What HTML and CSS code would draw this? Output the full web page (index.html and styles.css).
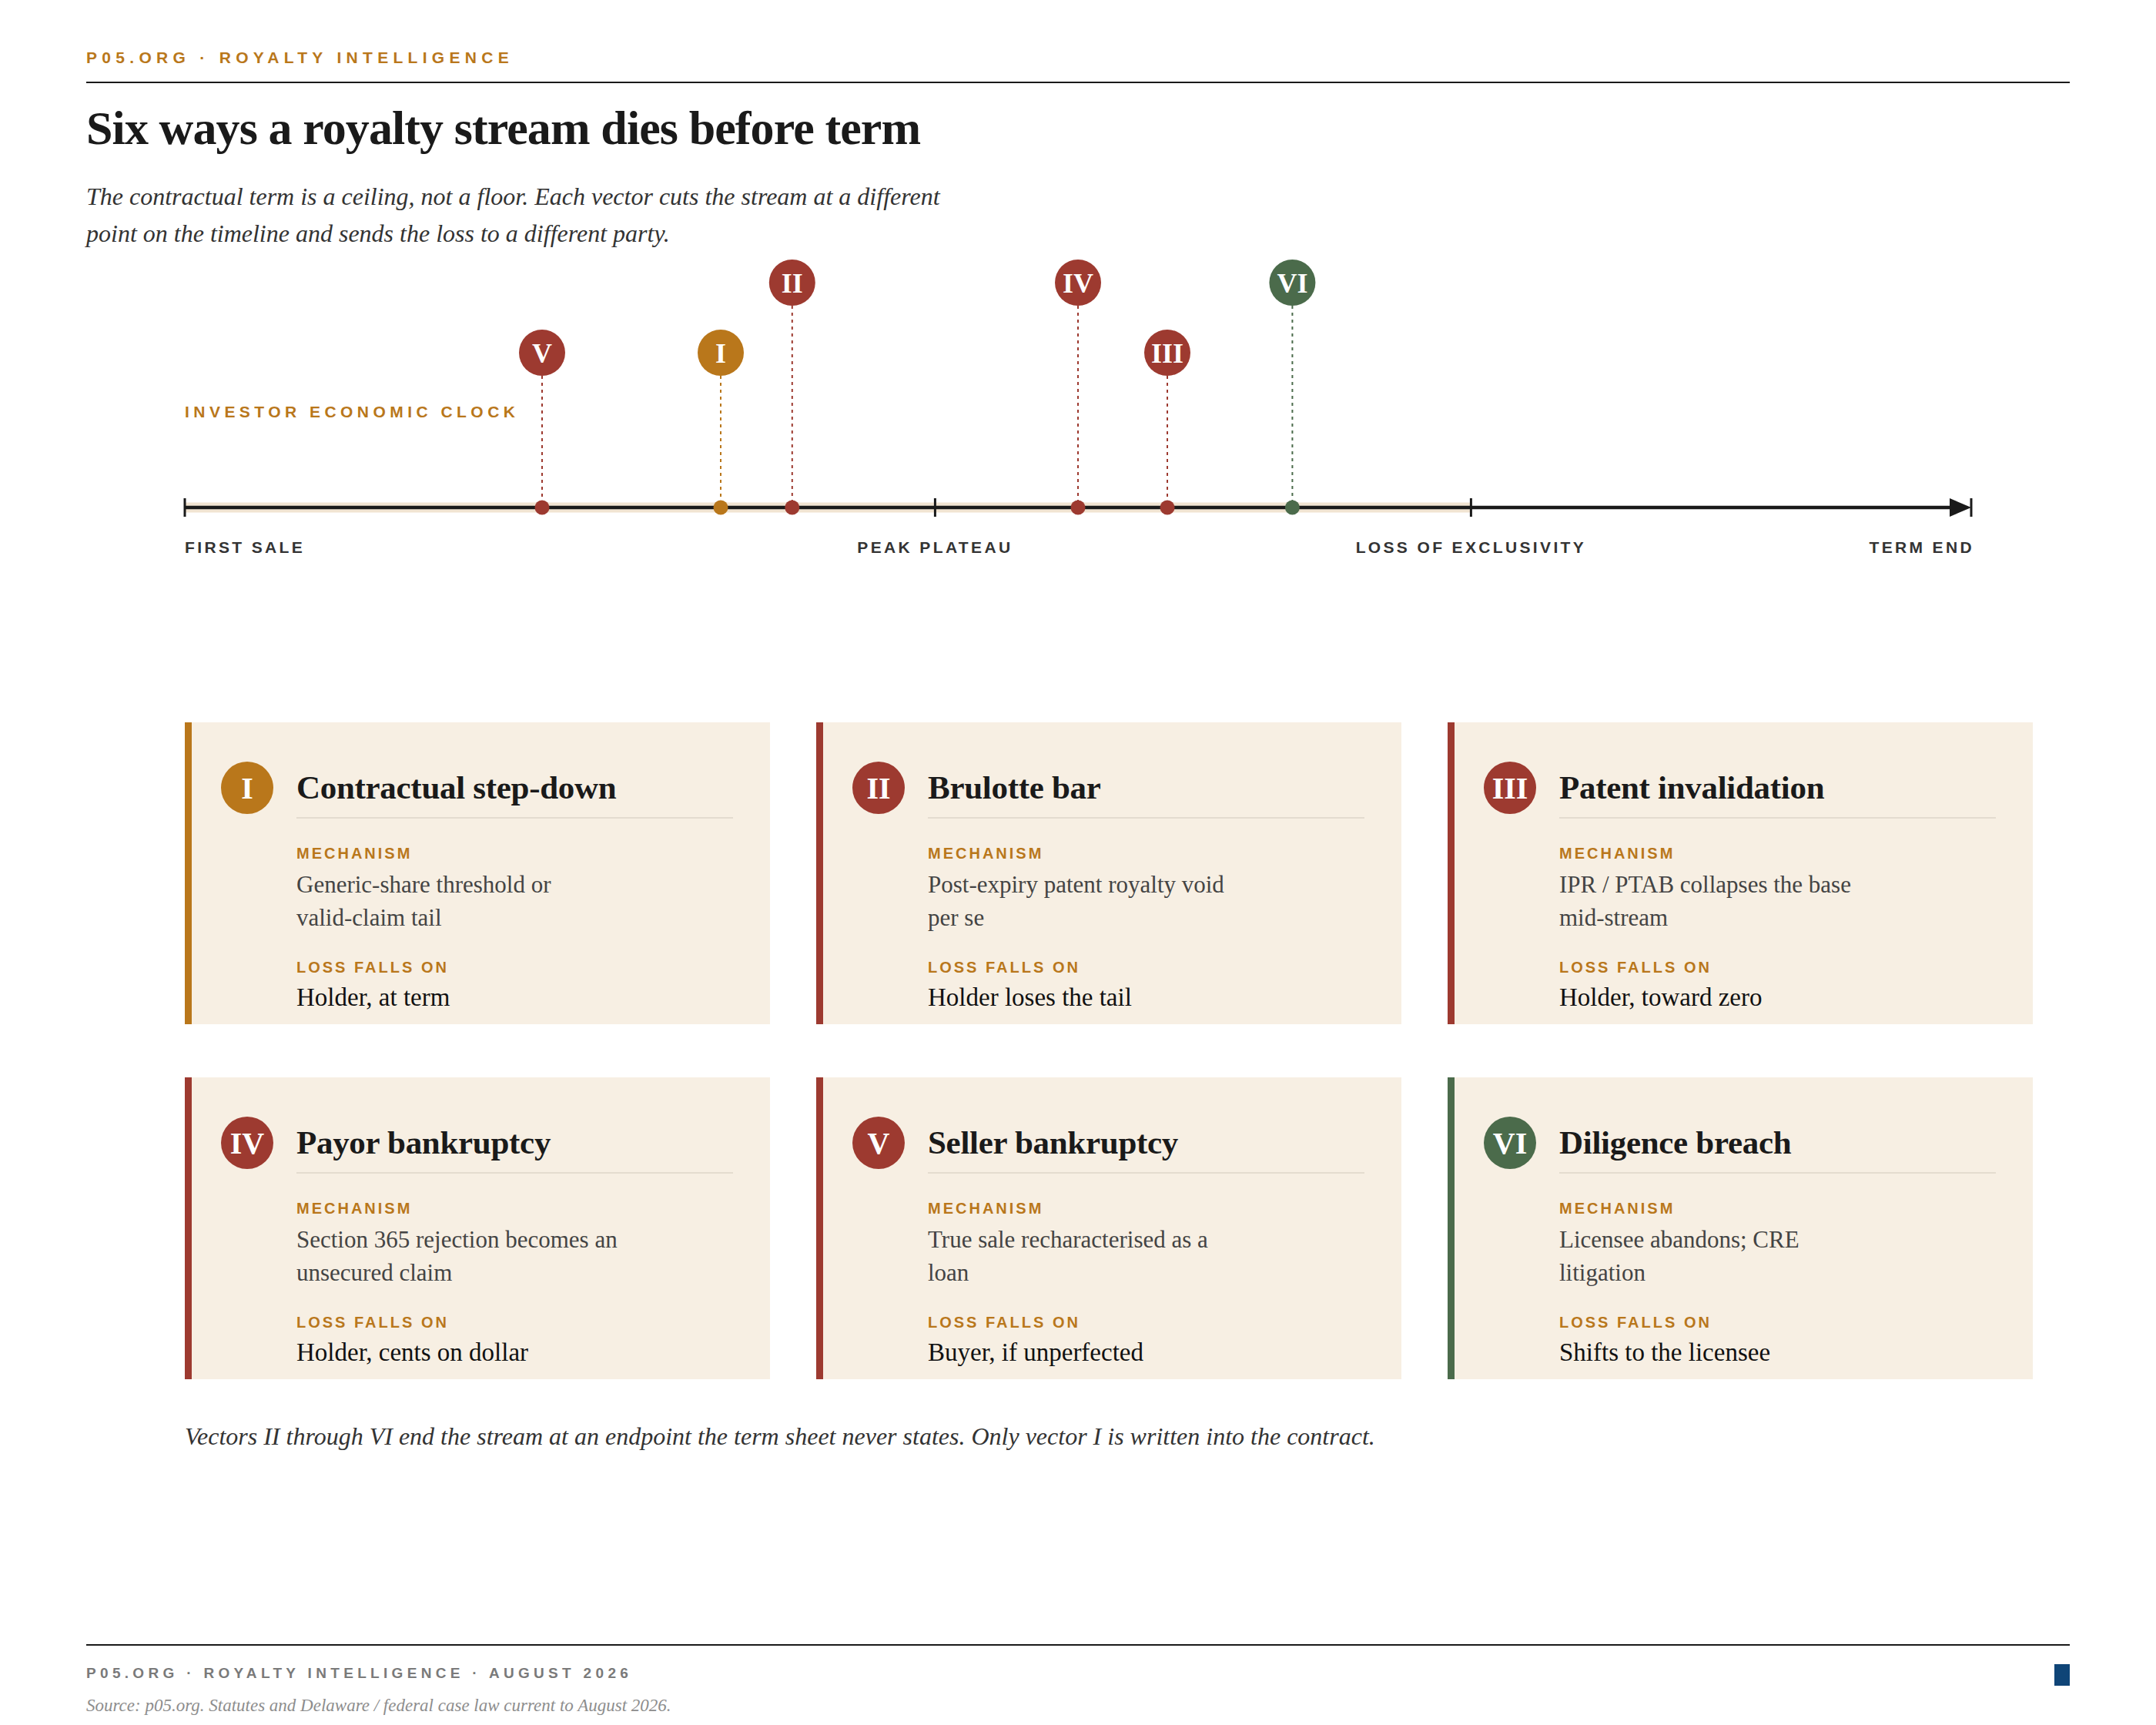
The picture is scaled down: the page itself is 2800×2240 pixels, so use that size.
FILE: index.html
```html
<!DOCTYPE html>
<html lang="en">
<head>
<meta charset="utf-8">
<title>Six ways a royalty stream dies before term</title>
<link rel="stylesheet" href="styles.css">
</head>
<body>
<div class="page">
  <header class="masthead">P05.ORG · ROYALTY INTELLIGENCE</header>
  <h1 class="title">Six ways a royalty stream dies before term</h1>
  <p class="lede">The contractual term is a ceiling, not a floor. Each vector cuts the stream at a different point on the timeline and sends the loss to a different party.</p>

  <svg class="timeline" width="2576" height="420" viewBox="0 0 2576 420">
    <rect x="128" y="329.5" width="1670.4" height="13" fill="#f1e4d2"/>
    <line x1="128" y1="336" x2="2430" y2="336" stroke="#1a1a1a" stroke-width="4.5"/>
    <polygon points="2420,324 2448,336 2420,348" fill="#1a1a1a"/>
    <line x1="128" y1="324" x2="128" y2="348" stroke="#1a1a1a" stroke-width="3"/>
    <line x1="1102.4" y1="324" x2="1102.4" y2="348" stroke="#1a1a1a" stroke-width="3"/>
    <line x1="1798.4" y1="324" x2="1798.4" y2="348" stroke="#1a1a1a" stroke-width="3"/>
    <line x1="2448" y1="324" x2="2448" y2="348" stroke="#1a1a1a" stroke-width="3"/>

    <text class="tl-clock" x="128" y="219">INVESTOR ECONOMIC CLOCK</text>

    <g class="mk red">
      <line class="stem" x1="592" y1="165" x2="592" y2="336"/>
      <circle cx="592" cy="336" r="9.5"/>
      <circle cx="592" cy="135" r="30"/>
      <text x="592" y="148">V</text>
    </g>
    <g class="mk gold">
      <line class="stem" x1="824" y1="165" x2="824" y2="336"/>
      <circle cx="824" cy="336" r="9.5"/>
      <circle cx="824" cy="135" r="30"/>
      <text x="824" y="148">I</text>
    </g>
    <g class="mk red">
      <line class="stem" x1="916.8" y1="74" x2="916.8" y2="336"/>
      <circle cx="916.8" cy="336" r="9.5"/>
      <circle cx="916.8" cy="44" r="30"/>
      <text x="916.8" y="57">II</text>
    </g>
    <g class="mk red">
      <line class="stem" x1="1288" y1="74" x2="1288" y2="336"/>
      <circle cx="1288" cy="336" r="9.5"/>
      <circle cx="1288" cy="44" r="30"/>
      <text x="1288" y="57">IV</text>
    </g>
    <g class="mk red">
      <line class="stem" x1="1404" y1="165" x2="1404" y2="336"/>
      <circle cx="1404" cy="336" r="9.5"/>
      <circle cx="1404" cy="135" r="30"/>
      <text x="1404" y="148">III</text>
    </g>
    <g class="mk green">
      <line class="stem" x1="1566.4" y1="74" x2="1566.4" y2="336"/>
      <circle cx="1566.4" cy="336" r="9.5"/>
      <circle cx="1566.4" cy="44" r="30"/>
      <text x="1566.4" y="57">VI</text>
    </g>

    <text class="tl-label" x="128" y="395">FIRST SALE</text>
    <text class="tl-label" x="1102.4" y="395" text-anchor="middle">PEAK PLATEAU</text>
    <text class="tl-label" x="1798.4" y="395" text-anchor="middle">LOSS OF EXCLUSIVITY</text>
    <text class="tl-label" x="2452" y="395" text-anchor="end">TERM END</text>
  </svg>

  <section class="cards">
    <article class="card gold">
      <div class="badge">I</div>
      <div class="card-body">
        <h2 class="card-title">Contractual step-down</h2>
        <div class="label">Mechanism</div>
        <p class="mech">Generic-share threshold or<br>valid-claim tail</p>
        <div class="label">Loss falls on</div>
        <p class="value">Holder, at term</p>
      </div>
    </article>
    <article class="card red">
      <div class="badge">II</div>
      <div class="card-body">
        <h2 class="card-title">Brulotte bar</h2>
        <div class="label">Mechanism</div>
        <p class="mech">Post-expiry patent royalty void<br>per se</p>
        <div class="label">Loss falls on</div>
        <p class="value">Holder loses the tail</p>
      </div>
    </article>
    <article class="card red">
      <div class="badge">III</div>
      <div class="card-body">
        <h2 class="card-title">Patent invalidation</h2>
        <div class="label">Mechanism</div>
        <p class="mech">IPR / PTAB collapses the base<br>mid-stream</p>
        <div class="label">Loss falls on</div>
        <p class="value">Holder, toward zero</p>
      </div>
    </article>
    <article class="card red">
      <div class="badge">IV</div>
      <div class="card-body">
        <h2 class="card-title">Payor bankruptcy</h2>
        <div class="label">Mechanism</div>
        <p class="mech">Section 365 rejection becomes an<br>unsecured claim</p>
        <div class="label">Loss falls on</div>
        <p class="value">Holder, cents on dollar</p>
      </div>
    </article>
    <article class="card red">
      <div class="badge">V</div>
      <div class="card-body">
        <h2 class="card-title">Seller bankruptcy</h2>
        <div class="label">Mechanism</div>
        <p class="mech">True sale recharacterised as a<br>loan</p>
        <div class="label">Loss falls on</div>
        <p class="value">Buyer, if unperfected</p>
      </div>
    </article>
    <article class="card green">
      <div class="badge">VI</div>
      <div class="card-body">
        <h2 class="card-title">Diligence breach</h2>
        <div class="label">Mechanism</div>
        <p class="mech">Licensee abandons; CRE<br>litigation</p>
        <div class="label">Loss falls on</div>
        <p class="value">Shifts to the licensee</p>
      </div>
    </article>
  </section>

  <p class="note">Vectors II through VI end the stream at an endpoint the term sheet never states. Only vector I is written into the contract.</p>

  <footer class="footer">
    <div class="footer-row">
      <span class="footer-text">P05.ORG · ROYALTY INTELLIGENCE · AUGUST 2026</span>
      <span class="footer-mark"></span>
    </div>
    <p class="source">Source: p05.org. Statutes and Delaware / federal case law current to August 2026.</p>
  </footer>
</div>
</body>
</html>
```

FILE: styles.css
```css
* {
  box-sizing: border-box;
  margin: 0;
  padding: 0;
}

body {
  margin: 0;
  background: #ffffff;
  color: #1a1a1a;
  font-family: "Liberation Serif", "Times New Roman", serif;
}

.page {
  width: 2800px;
  padding: 63px 112px 0;
}

.masthead {
  font-family: "Liberation Sans", Arial, sans-serif;
  font-weight: 700;
  font-size: 21px;
  line-height: 24px;
  letter-spacing: 0.3em;
  color: #b9771b;
  padding-bottom: 19px;
  border-bottom: 2px solid #1a1a1a;
}

.title {
  margin-top: 24px;
  font-weight: 700;
  font-size: 62px;
  line-height: 68px;
  letter-spacing: -0.9px;
  color: #1a1a1a;
}

.lede {
  margin-top: 31px;
  max-width: 1130px;
  font-style: italic;
  font-size: 32px;
  line-height: 48px;
  color: #333333;
}

.timeline {
  display: block;
  margin-top: -4px;
  overflow: visible;
}

.tl-clock {
  font-family: "Liberation Sans", Arial, sans-serif;
  font-weight: 700;
  font-size: 21px;
  letter-spacing: 0.26em;
  fill: #b9771b;
}

.tl-label {
  font-family: "Liberation Sans", Arial, sans-serif;
  font-weight: 700;
  font-size: 21px;
  letter-spacing: 0.16em;
  fill: #333333;
}

.mk text {
  font-family: "Liberation Serif", "Times New Roman", serif;
  font-weight: 700;
  font-size: 36px;
  fill: #ffffff;
  text-anchor: middle;
}

.mk .stem {
  stroke-width: 2;
  stroke-dasharray: 4 5;
}

.mk.red circle { fill: #9d3a30; }
.mk.red .stem { stroke: #9d3a30; }
.mk.gold circle { fill: #b9771b; }
.mk.gold .stem { stroke: #b9771b; }
.mk.green circle { fill: #4b6b4b; }
.mk.green .stem { stroke: #4b6b4b; }

.cards {
  margin-top: 195px;
  margin-left: 128px;
  width: 2400px;
  display: grid;
  grid-template-columns: repeat(3, 760px);
  column-gap: 60px;
  row-gap: 69px;
}

.card {
  display: grid;
  grid-template-columns: 68px 1fr;
  column-gap: 30px;
  align-items: start;
  background: #f7efe3;
  border-left: 9px solid #9d3a30;
  padding: 51px 48px 13px 38px;
}

.card.gold { border-left-color: #b9771b; }
.card.red { border-left-color: #9d3a30; }
.card.green { border-left-color: #4b6b4b; }

.badge {
  width: 68px;
  height: 68px;
  border-radius: 50%;
  display: flex;
  align-items: center;
  justify-content: center;
  color: #ffffff;
  font-weight: 700;
  font-size: 40px;
  line-height: 1;
  padding-top: 2px;
}

.card.gold .badge { background: #b9771b; }
.card.red .badge { background: #9d3a30; }
.card.green .badge { background: #4b6b4b; }

.card-title {
  font-weight: 700;
  font-size: 43px;
  line-height: 68px;
  letter-spacing: -0.3px;
  color: #1a1a1a;
  padding-bottom: 4px;
  border-bottom: 2px solid #e4dccf;
}

.label {
  font-family: "Liberation Sans", Arial, sans-serif;
  font-weight: 700;
  font-size: 20px;
  line-height: 24px;
  letter-spacing: 0.15em;
  text-transform: uppercase;
  color: #b9771b;
  margin-top: 33px;
}

.mech {
  margin-top: 7px;
  font-size: 31px;
  line-height: 43px;
  color: #444444;
}

.mech + .label {
  margin-top: 31px;
}

.value {
  margin-top: 6px;
  font-size: 33px;
  line-height: 43px;
  color: #111111;
}

.note {
  margin-top: 52px;
  margin-left: 128px;
  font-style: italic;
  font-size: 32px;
  line-height: 44px;
  color: #333333;
}

.footer {
  margin-top: 248px;
  border-top: 2px solid #1a1a1a;
  padding-top: 24px;
}

.footer-row {
  display: flex;
  justify-content: space-between;
  align-items: flex-start;
}

.footer-text {
  font-family: "Liberation Sans", Arial, sans-serif;
  font-weight: 700;
  font-size: 19px;
  line-height: 24px;
  letter-spacing: 0.28em;
  color: #7a7a7a;
}

.footer-mark {
  display: block;
  width: 20px;
  height: 28px;
  background: #0f4577;
}

.source {
  margin-top: 12px;
  font-style: italic;
  font-size: 23px;
  line-height: 28px;
  color: #8d8d8d;
}
```
